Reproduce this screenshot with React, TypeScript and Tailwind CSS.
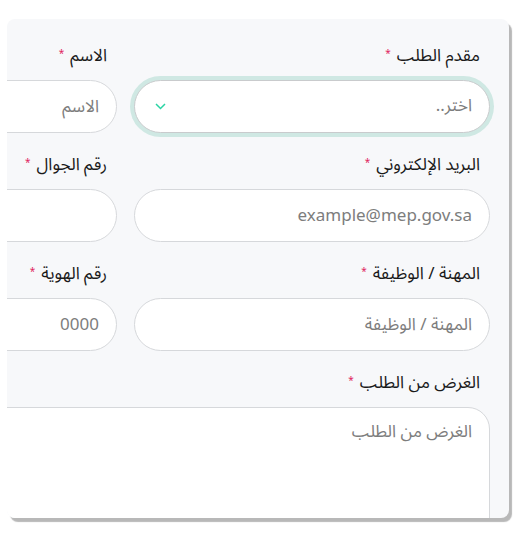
import React from 'react';

const font = { fontFamily: '"Noto Sans Arabic", "Noto Sans", "DejaVu Sans", sans-serif' };

const Label: React.FC<{ text: string }> = ({ text }) => (
  <label className="flex items-start gap-[6px] pr-[10px] h-6 text-[17px] leading-6 text-[#1a1a1a]">
    <span>{text}</span>
    <span className="text-[#e0245e] text-[10px] leading-3 mt-[4px]">*</span>
  </label>
);

const inputCls =
  'w-full h-[53px] rounded-full border border-[#d6d8db] bg-white px-[17px] text-[17px] text-[#222] placeholder:text-[#7d7d7d] outline-none';

export default function App() {
  return (
    <div className="w-[518px] h-[534px] bg-white pt-[19px] pl-[7px]" style={font}>
      <div
        dir="rtl"
        className="w-[502px] h-[499px] overflow-hidden rounded-lg bg-[#f7f8fa] shadow-[3px_4px_1px_#b8b8b8] pt-[25px] pr-[19px]"
      >
        <div className="grid grid-cols-[356px_356px] gap-x-[17px] gap-y-[20px]">
          <div className="flex flex-col gap-3">
            <Label text="مقدم الطلب" />
            <div className="h-[53px] rounded-full bg-white border border-[#c9cbcd] ring-4 ring-[#cfe8e3] flex items-center justify-between px-[17px]">
              <span className="text-[17px] text-[#7d7d7d]">اختر..</span>
              <svg width="11" height="7" viewBox="0 0 11 7" className="ml-[3px]">
                <path d="M1 1l4.5 4.5L10 1" fill="none" stroke="#2ad4a4" strokeWidth="1.5" />
              </svg>
            </div>
          </div>
          <div className="flex flex-col gap-3">
            <Label text="الاسم" />
            <input className={inputCls} placeholder="الاسم" />
          </div>

          <div className="flex flex-col gap-3">
            <Label text="البريد الإلكتروني" />
            <input className={inputCls} placeholder="example@mep.gov.sa" />
          </div>
          <div className="flex flex-col gap-3">
            <Label text="رقم الجوال" />
            <input className={inputCls} />
          </div>

          <div className="flex flex-col gap-3">
            <Label text="المهنة / الوظيفة" />
            <input className={inputCls} placeholder="المهنة / الوظيفة" />
          </div>
          <div className="flex flex-col gap-3">
            <Label text="رقم الهوية" />
            <input className={inputCls} placeholder="0000" />
          </div>

          <div className="col-span-2 flex flex-col gap-3">
            <Label text="الغرض من الطلب" />
            <textarea
              className="w-full h-[160px] resize-none rounded-[22px] border border-[#d6d8db] bg-white px-[17px] py-[12px] text-[17px] text-[#222] placeholder:text-[#7d7d7d] outline-none"
              placeholder="الغرض من الطلب"
            />
          </div>
        </div>
      </div>
    </div>
  );
}
